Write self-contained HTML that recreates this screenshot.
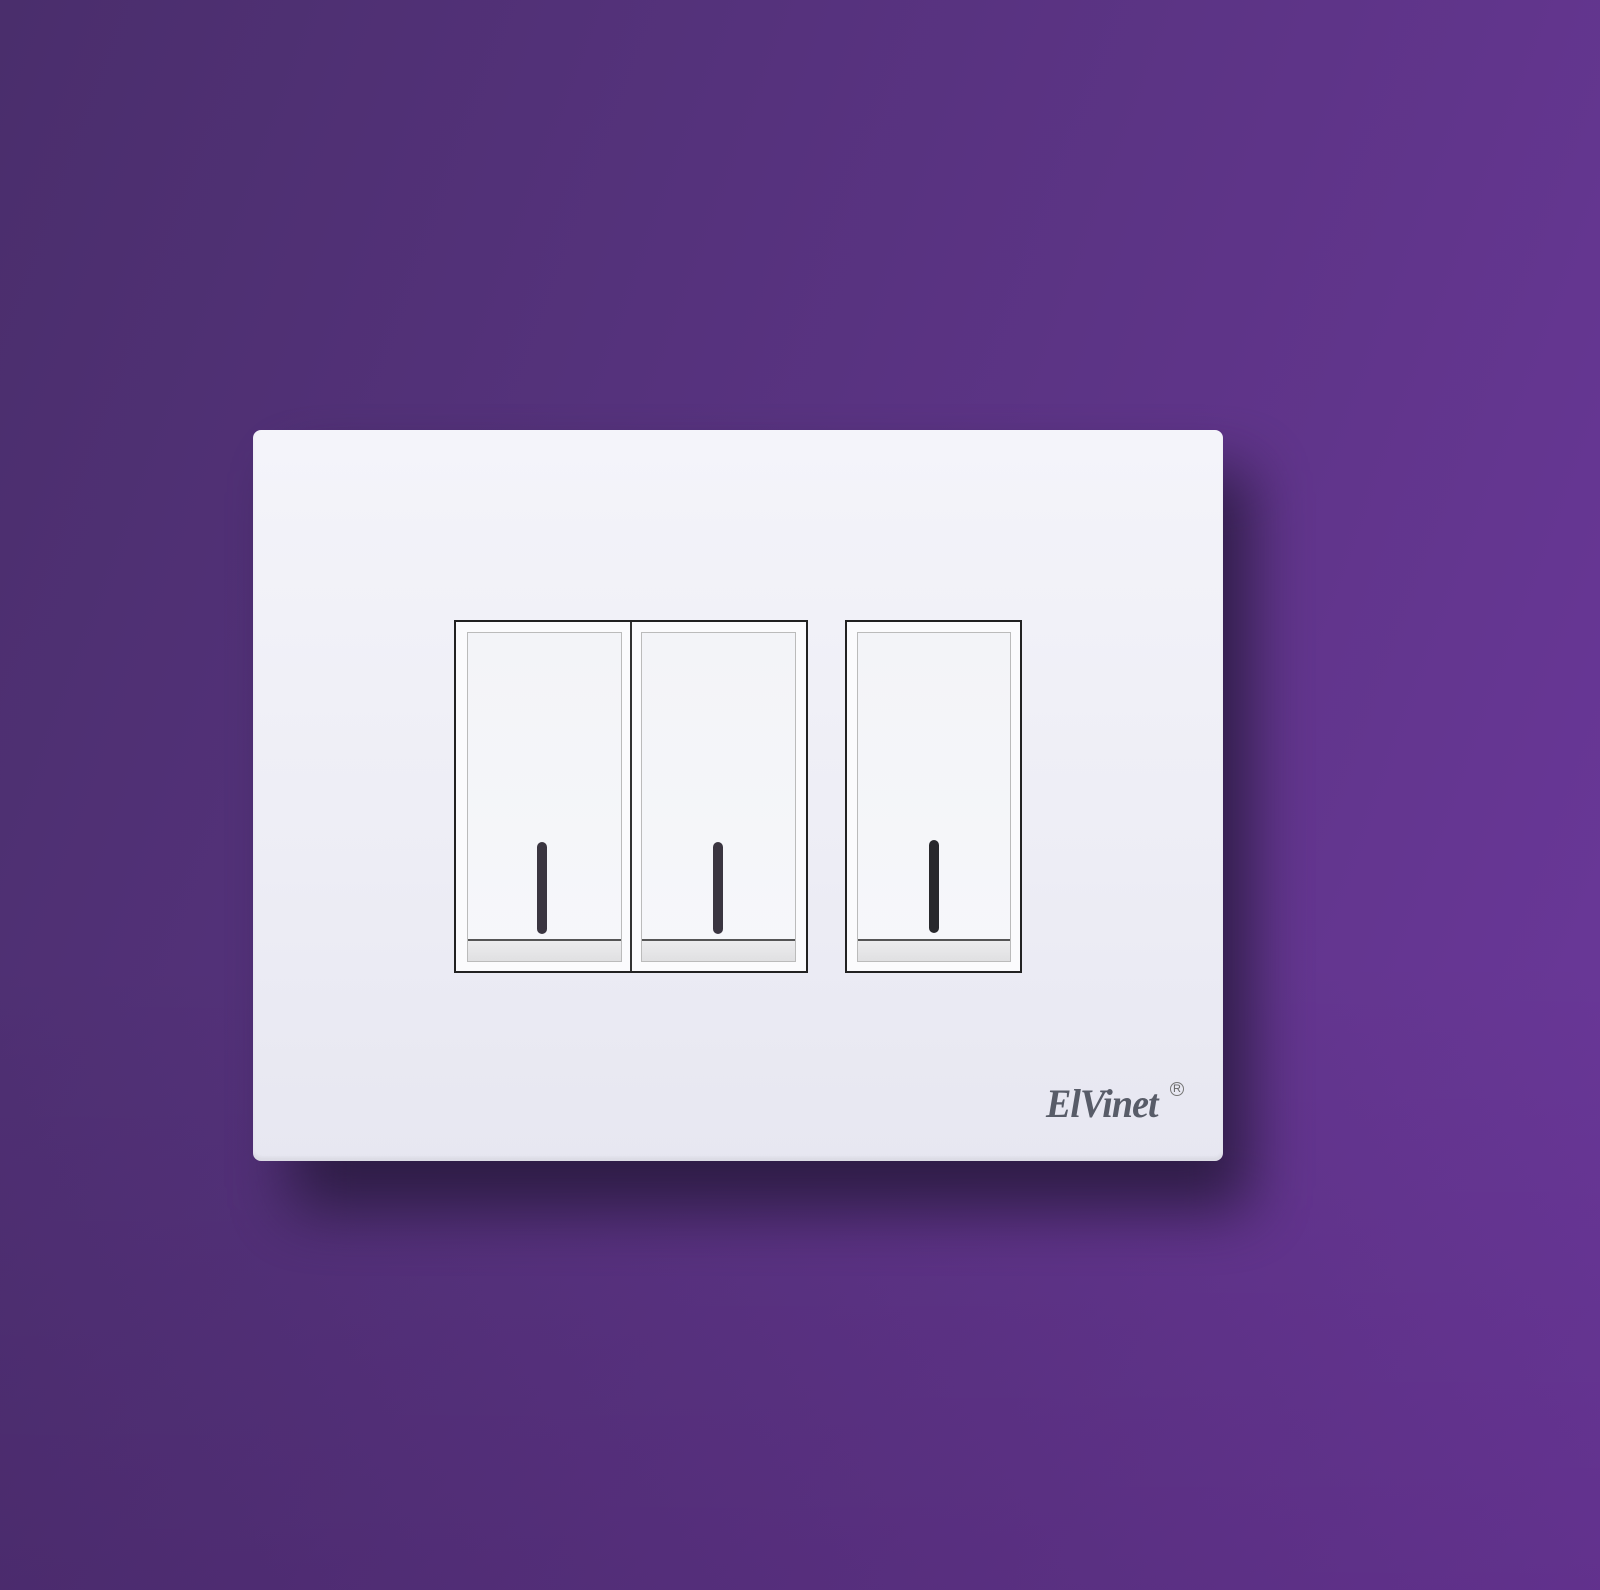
<!DOCTYPE html>
<html><head><meta charset="utf-8"><style>
html,body{margin:0;padding:0}
body{width:1600px;height:1590px;position:relative;overflow:hidden;
background:linear-gradient(110deg,#4a2e6c 0%,#55327c 35%,#61358c 70%,#6c389c 100%);}
.ov{position:absolute;inset:0;background:linear-gradient(180deg,rgba(0,0,0,0) 60%,rgba(20,0,30,0.12) 100%);}
.sh{position:absolute;left:290px;top:470px;width:960px;height:740px;background:#2a1a40;filter:blur(30px);opacity:.9;border-radius:10px}
.plate{position:absolute;left:253px;top:430px;width:970px;height:731px;border-radius:8px;
background:linear-gradient(180deg,#f4f4fa 0%,#ededf5 60%,#e7e7f1 100%);box-shadow:inset 0 -4px 3px rgba(0,0,0,0.05)}
.frame{position:absolute;border:2px solid #222;background:#fbfbfd;box-sizing:border-box}
.rk{position:absolute;border:1px solid #bbb;background:linear-gradient(180deg,#f3f4f8,#f6f7fa);box-sizing:border-box}
.strip{position:absolute;left:0;right:0;bottom:0;height:20px;background:linear-gradient(180deg,#ececee,#e0e0e2);border-top:2px solid #555}
.ln{position:absolute;width:10px;border-radius:5px;background:#3a3540}
.logo{position:absolute;left:1046px;top:1080px;font-family:"Liberation Serif",serif;font-weight:bold;font-style:italic;font-size:40px;color:#585c68;letter-spacing:-1px;transform:scaleX(0.95);transform-origin:left}
.r{position:absolute;left:1170px;top:1082px;font-family:"Liberation Sans",sans-serif;font-size:11px;color:#666;border:1px solid #777;border-radius:50%;width:12px;height:12px;line-height:12px;text-align:center}
</style></head><body>
<div class="ov"></div>
<div class="sh"></div>
<div class="plate"></div>
<div class="frame" style="left:454px;top:620px;width:354px;height:353px"></div>
<div style="position:absolute;left:630px;top:622px;width:2px;height:349px;background:#333"></div>
<div class="frame" style="left:845px;top:620px;width:177px;height:353px"></div>
<div class="rk" style="left:467px;top:632px;width:155px;height:330px"><div class="strip"></div></div>
<div class="rk" style="left:641px;top:632px;width:155px;height:330px"><div class="strip"></div></div>
<div class="rk" style="left:857px;top:632px;width:154px;height:330px"><div class="strip"></div></div>
<div class="ln" style="left:537px;top:842px;height:92px"></div>
<div class="ln" style="left:713px;top:842px;height:92px"></div>
<div class="ln" style="left:929px;top:840px;height:93px;background:#28282c"></div>
<div class="logo">ElVinet</div>
<div class="r">R</div>
</body></html>
